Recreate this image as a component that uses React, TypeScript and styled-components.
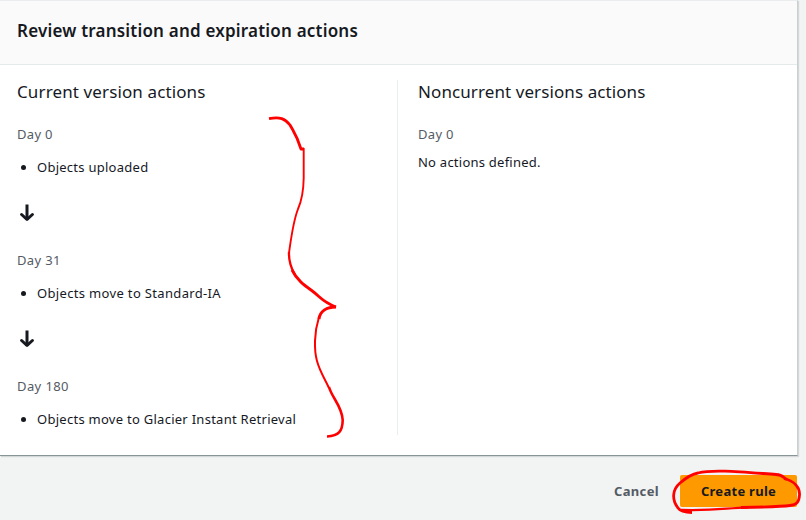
import React from 'react';
import styled, { createGlobalStyle } from 'styled-components';

const GlobalStyle = createGlobalStyle`
  * { box-sizing: border-box; }
  body {
    margin: 0;
    background: #f2f3f3;
    color: #16191f;
    font-family: 'Noto Sans', 'Open Sans', sans-serif;
    font-size: 13px;
    line-height: 22px;
  }
`;

const Page = styled.main`
  position: relative;
  width: 806px;
  height: 520px;
  overflow: hidden;
`;

const Panel = styled.section`
  width: 798px;
  height: 456px;
  background: #fff;
  border-top: 1px solid #eaeded;
  border-right: 1px solid #c9d0d0;
  border-bottom: 1px solid #879596;
  box-shadow: 1px 1px 1px rgba(0, 28, 36, 0.12);
`;

const PanelHeader = styled.header`
  display: flex;
  align-items: center;
  height: 64px;
  padding: 0 17px 4px;
  background: #fafafa;
  border-bottom: 1px solid #e4e9e9;
`;

const Label = styled.span<{ $spacing?: number }>`
  white-space: nowrap;
  letter-spacing: ${({ $spacing = 0 }) => $spacing}px;
`;

const PanelTitle = styled.h2`
  margin: 0;
  font-size: 17px;
  font-weight: 600;
  line-height: 22px;
`;

const Columns = styled.div`
  display: grid;
  grid-template-columns: 397px 1fr;
  height: 355px;
  margin-top: 15px;
`;

const Column = styled.div<{ $divided?: boolean }>`
  padding-top: 1px;
  padding-left: ${({ $divided }) => ($divided ? 20 : 17)}px;
  border-left: ${({ $divided }) => ($divided ? '1px solid #eaeded' : 'none')};
`;

const ColumnTitle = styled.h3`
  margin: 0 0 20px;
  font-size: 17px;
  font-weight: 400;
  line-height: 22px;
`;

const Day = styled.div`
  color: #545b64;
`;

const Empty = styled.p`
  margin: 6px 0 0;
`;

const ActionList = styled.ul`
  margin: 11px 0 0;
  padding: 0;
  list-style: none;
`;

const Action = styled.li`
  display: flex;
  align-items: center;

  &::before {
    content: '';
    width: 5px;
    height: 5px;
    margin: 0 11px 0 4px;
    border-radius: 50%;
    background: #16191f;
  }
`;

const ArrowRow = styled.div`
  display: flex;
  align-items: center;
  height: 71px;
  padding: 0 0 1px 3px;

  svg { display: block; }
`;

const Footer = styled.footer`
  display: flex;
  justify-content: flex-end;
  gap: 21px;
  width: 797px;
  padding-top: 19px;
`;

const Button = styled.button<{ $primary?: boolean }>`
  width: ${({ $primary }) => ($primary ? '117px' : 'auto')};
  height: 32px;
  padding: 0;
  border: 0;
  border-radius: 2px;
  background: ${({ $primary }) => ($primary ? '#ff9900' : 'transparent')};
  color: ${({ $primary }) => ($primary ? '#16191f' : '#545b64')};
  font: 700 13px/32px 'Noto Sans', sans-serif;
`;

const PenLayer = styled.svg`
  position: absolute;
  inset: 0;
  pointer-events: none;
`;

const DownArrow = () => (
  <svg width="14" height="18" viewBox="0 0 14 18" fill="none" stroke="#16191f" strokeWidth="3">
    <path d="M7 0.5V16" />
    <path d="M1.6 10.5L7 15.5L12.4 10.5" strokeLinejoin="round" strokeLinecap="round" />
  </svg>
);

const steps = [
  { day: 'Day 0', daySpacing: 0.3, action: 'Objects uploaded', spacing: 0.26 },
  { day: 'Day 31', daySpacing: 0.35, action: 'Objects move to Standard-IA', spacing: 0.34 },
  { day: 'Day 180', daySpacing: 0.4, action: 'Objects move to Glacier Instant Retrieval', spacing: 0.27 },
];

export default function App() {
  return (
    <>
      <GlobalStyle />
      <Page>
        <Panel>
          <PanelHeader>
            <PanelTitle><Label $spacing={0.2}>Review transition and expiration actions</Label></PanelTitle>
          </PanelHeader>
          <Columns>
            <Column>
              <ColumnTitle><Label $spacing={0.12}>Current version actions</Label></ColumnTitle>
              {steps.map((step, index) => (
                <React.Fragment key={step.day}>
                  {index > 0 && <ArrowRow><DownArrow /></ArrowRow>}
                  <Day><Label $spacing={step.daySpacing}>{step.day}</Label></Day>
                  <ActionList>
                    <Action><Label $spacing={step.spacing}>{step.action}</Label></Action>
                  </ActionList>
                </React.Fragment>
              ))}
            </Column>
            <Column $divided>
              <ColumnTitle><Label $spacing={0.09}>Noncurrent versions actions</Label></ColumnTitle>
              <Day><Label $spacing={0.3}>Day 0</Label></Day>
              <Empty><Label $spacing={0.24}>No actions defined.</Label></Empty>
            </Column>
          </Columns>
        </Panel>
        <Footer>
          <Button><Label $spacing={0.35}>Cancel</Label></Button>
          <Button $primary><Label $spacing={0.28}>Create rule</Label></Button>
        </Footer>
        <PenLayer width="806" height="520" viewBox="0 0 806 520" fill="none" stroke="#ff0000" strokeLinejoin="round">
          <path d="M269 118.6C280 116.5 285 118.5 290 125C295 134 297 136 301 149H304" strokeWidth="2.8" />
          <path d="M303.7 148V178C303.5 191 302 200 298 209C293 222 291 239 289 253" strokeWidth="1.9" />
          <path d="M289 252C288.5 262 291 268 295 275" strokeWidth="2.3" />
          <path d="M292 270C297 280 304 285 311 290C322 298 321 301 336 307" strokeWidth="2.8" />
          <path d="M336 307C327 307 320 311 319 319" strokeWidth="3" />
          <path d="M319 317C314 333 314 350 317 361C320 372 325 379 329 388" strokeWidth="2" />
          <path d="M329 387C332 398 342 406 342.7 420C342.5 431 339 436 327 436.5" strokeWidth="2.6" />
          <path d="M692 512.5C683 512.5 680 511 678 508C671 499 673 489 680 483C687 477 692 474 698 473C713 469 742 472 776 474.5C784 475 783 478 787 479.5" strokeWidth="2.8" />
          <path d="M784 478.5C795 481 800 488 799.5 495C799 502 797 505 790 505.5C783 506.5 770 507 741 507.5" strokeWidth="2.8" />
          <path d="M748 507.3C724 508 718 511 681 510" strokeWidth="2.3" />
        </PenLayer>
      </Page>
    </>
  );
}
